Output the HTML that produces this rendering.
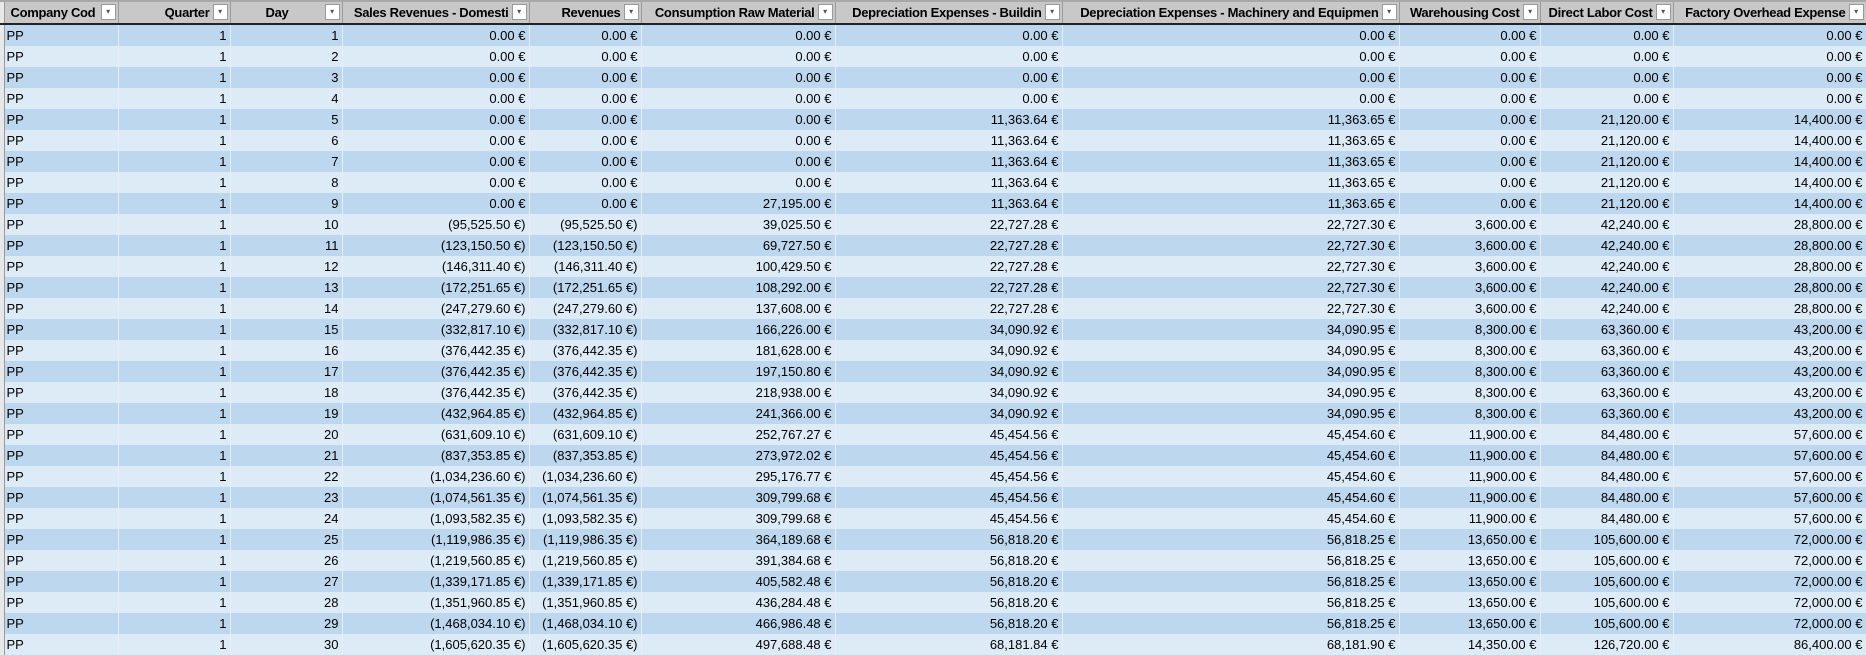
<!DOCTYPE html>
<html><head><meta charset="utf-8"><style>
body{margin:0;width:1866px;height:653px;overflow:hidden;background:#fff;font-family:"Liberation Sans Narrow","Liberation Sans",sans-serif;font-size:13px;color:#000}
table{border-collapse:collapse;table-layout:fixed;position:absolute;left:0;top:0;width:1866px}
td,th{padding:0 3px 0 2px;white-space:nowrap;overflow:hidden;text-align:right;border-right:1px solid #e6eef7;height:21px;line-height:21px;box-sizing:border-box}
th{background:#c8c8c8;font-weight:bold;height:23px;border-top:2px solid #a8a8a8;border-bottom:2px solid #222;border-right:1px solid #9a9a9a;position:relative;padding-right:20px;text-align:right;letter-spacing:-0.3px}
th.l{text-align:left;padding-left:6px}
th span.f{position:absolute;right:2px;top:2px;width:13px;height:14px;background:#fff;border:1px solid #999;font-size:8px;line-height:14px;text-align:center;color:#555;font-weight:normal}
tr:nth-child(even) td{background:#bdd7ee}
tr:nth-child(odd) td{background:#ddebf7}
td.g,th.g{background:#e8e8e8!important;border-right:1px solid #999;padding:0}
td.c{text-align:left;padding-left:2px}
</style></head><body>
<table>
<colgroup><col style="width:4px"><col style="width:114px"><col style="width:112px"><col style="width:112px"><col style="width:187px"><col style="width:112px"><col style="width:194px"><col style="width:227px"><col style="width:337px"><col style="width:141px"><col style="width:133px"><col style="width:193px"></colgroup>
<tr><th class="g"></th><th class="l">Company Cod<span class="f">▾</span></th><th>Quarter<span class="f">▾</span></th><th style="text-align:center">Day<span class="f">▾</span></th><th>Sales Revenues - Domesti<span class="f">▾</span></th><th>Revenues<span class="f">▾</span></th><th>Consumption Raw Material<span class="f">▾</span></th><th>Depreciation Expenses - Buildin<span class="f">▾</span></th><th>Depreciation Expenses - Machinery and Equipmen<span class="f">▾</span></th><th>Warehousing Cost<span class="f">▾</span></th><th>Direct Labor Cost<span class="f">▾</span></th><th>Factory Overhead Expense<span class="f">▾</span></th></tr>
<tr><td class="g"></td><td class="c">PP</td><td>1</td><td>1</td><td>0.00 €</td><td>0.00 €</td><td>0.00 €</td><td>0.00 €</td><td>0.00 €</td><td>0.00 €</td><td>0.00 €</td><td>0.00 €</td></tr>
<tr><td class="g"></td><td class="c">PP</td><td>1</td><td>2</td><td>0.00 €</td><td>0.00 €</td><td>0.00 €</td><td>0.00 €</td><td>0.00 €</td><td>0.00 €</td><td>0.00 €</td><td>0.00 €</td></tr>
<tr><td class="g"></td><td class="c">PP</td><td>1</td><td>3</td><td>0.00 €</td><td>0.00 €</td><td>0.00 €</td><td>0.00 €</td><td>0.00 €</td><td>0.00 €</td><td>0.00 €</td><td>0.00 €</td></tr>
<tr><td class="g"></td><td class="c">PP</td><td>1</td><td>4</td><td>0.00 €</td><td>0.00 €</td><td>0.00 €</td><td>0.00 €</td><td>0.00 €</td><td>0.00 €</td><td>0.00 €</td><td>0.00 €</td></tr>
<tr><td class="g"></td><td class="c">PP</td><td>1</td><td>5</td><td>0.00 €</td><td>0.00 €</td><td>0.00 €</td><td>11,363.64 €</td><td>11,363.65 €</td><td>0.00 €</td><td>21,120.00 €</td><td>14,400.00 €</td></tr>
<tr><td class="g"></td><td class="c">PP</td><td>1</td><td>6</td><td>0.00 €</td><td>0.00 €</td><td>0.00 €</td><td>11,363.64 €</td><td>11,363.65 €</td><td>0.00 €</td><td>21,120.00 €</td><td>14,400.00 €</td></tr>
<tr><td class="g"></td><td class="c">PP</td><td>1</td><td>7</td><td>0.00 €</td><td>0.00 €</td><td>0.00 €</td><td>11,363.64 €</td><td>11,363.65 €</td><td>0.00 €</td><td>21,120.00 €</td><td>14,400.00 €</td></tr>
<tr><td class="g"></td><td class="c">PP</td><td>1</td><td>8</td><td>0.00 €</td><td>0.00 €</td><td>0.00 €</td><td>11,363.64 €</td><td>11,363.65 €</td><td>0.00 €</td><td>21,120.00 €</td><td>14,400.00 €</td></tr>
<tr><td class="g"></td><td class="c">PP</td><td>1</td><td>9</td><td>0.00 €</td><td>0.00 €</td><td>27,195.00 €</td><td>11,363.64 €</td><td>11,363.65 €</td><td>0.00 €</td><td>21,120.00 €</td><td>14,400.00 €</td></tr>
<tr><td class="g"></td><td class="c">PP</td><td>1</td><td>10</td><td>(95,525.50 €)</td><td>(95,525.50 €)</td><td>39,025.50 €</td><td>22,727.28 €</td><td>22,727.30 €</td><td>3,600.00 €</td><td>42,240.00 €</td><td>28,800.00 €</td></tr>
<tr><td class="g"></td><td class="c">PP</td><td>1</td><td>11</td><td>(123,150.50 €)</td><td>(123,150.50 €)</td><td>69,727.50 €</td><td>22,727.28 €</td><td>22,727.30 €</td><td>3,600.00 €</td><td>42,240.00 €</td><td>28,800.00 €</td></tr>
<tr><td class="g"></td><td class="c">PP</td><td>1</td><td>12</td><td>(146,311.40 €)</td><td>(146,311.40 €)</td><td>100,429.50 €</td><td>22,727.28 €</td><td>22,727.30 €</td><td>3,600.00 €</td><td>42,240.00 €</td><td>28,800.00 €</td></tr>
<tr><td class="g"></td><td class="c">PP</td><td>1</td><td>13</td><td>(172,251.65 €)</td><td>(172,251.65 €)</td><td>108,292.00 €</td><td>22,727.28 €</td><td>22,727.30 €</td><td>3,600.00 €</td><td>42,240.00 €</td><td>28,800.00 €</td></tr>
<tr><td class="g"></td><td class="c">PP</td><td>1</td><td>14</td><td>(247,279.60 €)</td><td>(247,279.60 €)</td><td>137,608.00 €</td><td>22,727.28 €</td><td>22,727.30 €</td><td>3,600.00 €</td><td>42,240.00 €</td><td>28,800.00 €</td></tr>
<tr><td class="g"></td><td class="c">PP</td><td>1</td><td>15</td><td>(332,817.10 €)</td><td>(332,817.10 €)</td><td>166,226.00 €</td><td>34,090.92 €</td><td>34,090.95 €</td><td>8,300.00 €</td><td>63,360.00 €</td><td>43,200.00 €</td></tr>
<tr><td class="g"></td><td class="c">PP</td><td>1</td><td>16</td><td>(376,442.35 €)</td><td>(376,442.35 €)</td><td>181,628.00 €</td><td>34,090.92 €</td><td>34,090.95 €</td><td>8,300.00 €</td><td>63,360.00 €</td><td>43,200.00 €</td></tr>
<tr><td class="g"></td><td class="c">PP</td><td>1</td><td>17</td><td>(376,442.35 €)</td><td>(376,442.35 €)</td><td>197,150.80 €</td><td>34,090.92 €</td><td>34,090.95 €</td><td>8,300.00 €</td><td>63,360.00 €</td><td>43,200.00 €</td></tr>
<tr><td class="g"></td><td class="c">PP</td><td>1</td><td>18</td><td>(376,442.35 €)</td><td>(376,442.35 €)</td><td>218,938.00 €</td><td>34,090.92 €</td><td>34,090.95 €</td><td>8,300.00 €</td><td>63,360.00 €</td><td>43,200.00 €</td></tr>
<tr><td class="g"></td><td class="c">PP</td><td>1</td><td>19</td><td>(432,964.85 €)</td><td>(432,964.85 €)</td><td>241,366.00 €</td><td>34,090.92 €</td><td>34,090.95 €</td><td>8,300.00 €</td><td>63,360.00 €</td><td>43,200.00 €</td></tr>
<tr><td class="g"></td><td class="c">PP</td><td>1</td><td>20</td><td>(631,609.10 €)</td><td>(631,609.10 €)</td><td>252,767.27 €</td><td>45,454.56 €</td><td>45,454.60 €</td><td>11,900.00 €</td><td>84,480.00 €</td><td>57,600.00 €</td></tr>
<tr><td class="g"></td><td class="c">PP</td><td>1</td><td>21</td><td>(837,353.85 €)</td><td>(837,353.85 €)</td><td>273,972.02 €</td><td>45,454.56 €</td><td>45,454.60 €</td><td>11,900.00 €</td><td>84,480.00 €</td><td>57,600.00 €</td></tr>
<tr><td class="g"></td><td class="c">PP</td><td>1</td><td>22</td><td>(1,034,236.60 €)</td><td>(1,034,236.60 €)</td><td>295,176.77 €</td><td>45,454.56 €</td><td>45,454.60 €</td><td>11,900.00 €</td><td>84,480.00 €</td><td>57,600.00 €</td></tr>
<tr><td class="g"></td><td class="c">PP</td><td>1</td><td>23</td><td>(1,074,561.35 €)</td><td>(1,074,561.35 €)</td><td>309,799.68 €</td><td>45,454.56 €</td><td>45,454.60 €</td><td>11,900.00 €</td><td>84,480.00 €</td><td>57,600.00 €</td></tr>
<tr><td class="g"></td><td class="c">PP</td><td>1</td><td>24</td><td>(1,093,582.35 €)</td><td>(1,093,582.35 €)</td><td>309,799.68 €</td><td>45,454.56 €</td><td>45,454.60 €</td><td>11,900.00 €</td><td>84,480.00 €</td><td>57,600.00 €</td></tr>
<tr><td class="g"></td><td class="c">PP</td><td>1</td><td>25</td><td>(1,119,986.35 €)</td><td>(1,119,986.35 €)</td><td>364,189.68 €</td><td>56,818.20 €</td><td>56,818.25 €</td><td>13,650.00 €</td><td>105,600.00 €</td><td>72,000.00 €</td></tr>
<tr><td class="g"></td><td class="c">PP</td><td>1</td><td>26</td><td>(1,219,560.85 €)</td><td>(1,219,560.85 €)</td><td>391,384.68 €</td><td>56,818.20 €</td><td>56,818.25 €</td><td>13,650.00 €</td><td>105,600.00 €</td><td>72,000.00 €</td></tr>
<tr><td class="g"></td><td class="c">PP</td><td>1</td><td>27</td><td>(1,339,171.85 €)</td><td>(1,339,171.85 €)</td><td>405,582.48 €</td><td>56,818.20 €</td><td>56,818.25 €</td><td>13,650.00 €</td><td>105,600.00 €</td><td>72,000.00 €</td></tr>
<tr><td class="g"></td><td class="c">PP</td><td>1</td><td>28</td><td>(1,351,960.85 €)</td><td>(1,351,960.85 €)</td><td>436,284.48 €</td><td>56,818.20 €</td><td>56,818.25 €</td><td>13,650.00 €</td><td>105,600.00 €</td><td>72,000.00 €</td></tr>
<tr><td class="g"></td><td class="c">PP</td><td>1</td><td>29</td><td>(1,468,034.10 €)</td><td>(1,468,034.10 €)</td><td>466,986.48 €</td><td>56,818.20 €</td><td>56,818.25 €</td><td>13,650.00 €</td><td>105,600.00 €</td><td>72,000.00 €</td></tr>
<tr><td class="g"></td><td class="c">PP</td><td>1</td><td>30</td><td>(1,605,620.35 €)</td><td>(1,605,620.35 €)</td><td>497,688.48 €</td><td>68,181.84 €</td><td>68,181.90 €</td><td>14,350.00 €</td><td>126,720.00 €</td><td>86,400.00 €</td></tr>
</table>
</body></html>
